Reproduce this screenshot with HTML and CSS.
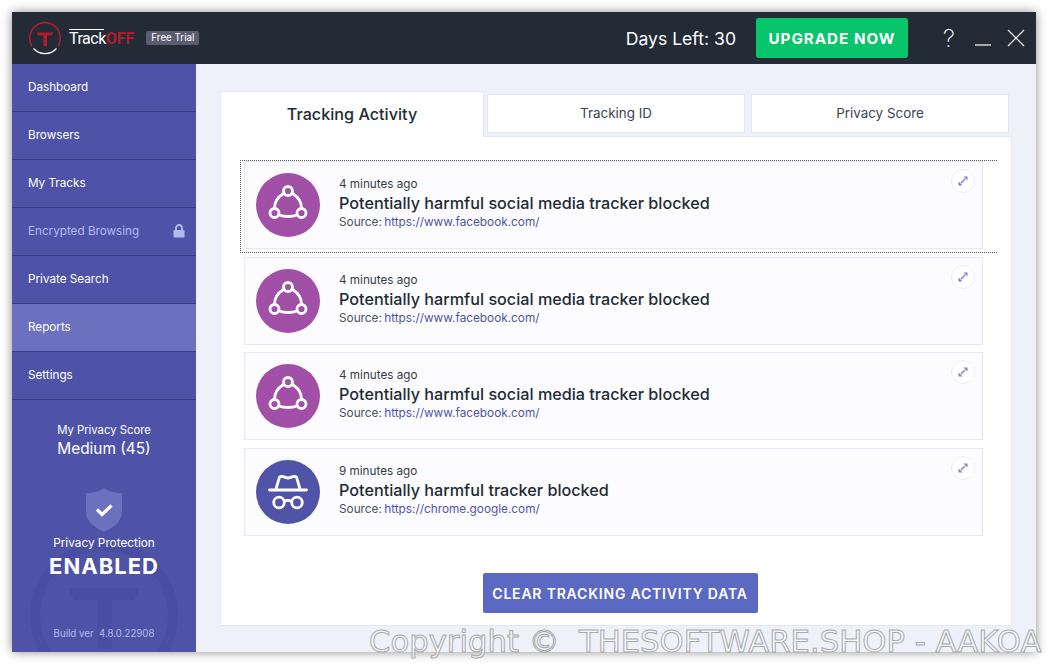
FILE: index.html
```html
<!DOCTYPE html>
<html lang="en">
<head>
<meta charset="utf-8">
<title>TrackOFF</title>
<link rel="stylesheet" href="styles.css">
</head>
<body>
<div class="window">
  <header class="topbar">
    <div class="brand">
      <svg class="logo" width="34" height="34" viewBox="0 0 34 34" fill="none">
        <path d="M4 25A15.300 15.300 0 1 1 30 25" stroke="#b01c2e" stroke-width="1.600"/>
        <path d="M5.500 27.500A15.500 15.500 0 0 0 28.500 27.500" stroke="#fff" stroke-width="1.200"/>
        <path d="M9 11.500H25L24 14.500H19V25H15.500V14.500H10Z" fill="#b01c2e"/>
      </svg>
      <span class="wordmark"><span class="wm-track">Track</span><span class="wm-off">OFF</span></span>
      <span class="badge">Free Trial</span>
    </div>
    <div class="topright">
      <span class="days">Days Left: 30</span>
      <button class="upgrade">UPGRADE NOW</button>
      <div class="winctl">
        <span class="help">?</span>
        <svg width="16" height="16" viewBox="0 0 16 16"><path d="M0 15H16" stroke="#fff" stroke-width="1.200"/></svg>
        <svg width="18" height="18" viewBox="0 0 18 18"><path d="M1 1L17 17M17 1L1 17" stroke="#fff" stroke-width="1.200"/></svg>
      </div>
    </div>
  </header>
  <div class="body">
    <aside class="sidebar">
      <nav class="nav">
        <a class="nav-item">Dashboard</a>
        <a class="nav-item">Browsers</a>
        <a class="nav-item">My Tracks</a>
        <a class="nav-item nav-locked">Encrypted Browsing
          <svg width="12" height="14" viewBox="0 0 12 14"><path d="M3 6V4a3 3 0 0 1 6 0v2" fill="none" stroke="#b4b8ee" stroke-width="1.800"/><rect x="0.500" y="6" width="11" height="7.500" rx="1" fill="#b4b8ee"/></svg>
        </a>
        <a class="nav-item">Private Search</a>
        <a class="nav-item nav-active">Reports</a>
        <a class="nav-item">Settings</a>
      </nav>
      <div class="side-bottom">
        <svg class="side-mark" width="184" height="160" viewBox="0 0 184 160" fill="none">
          <circle cx="92" cy="78" r="69" stroke="#4a4ea3" stroke-width="10"/>
          <path d="M56 51H128L122 63H100V112H85V63H62Z" fill="#4a4ea3"/>
        </svg>
        <div class="score-label">My Privacy Score</div>
        <div class="score-value">Medium (45)</div>
        <svg class="shield" width="36" height="44" viewBox="0 0 36 44">
          <path d="M18 0C23 4 29 5 36 5V24C36 33 27 40 18 44C9 40 0 33 0 24V5C7 5 13 4 18 0Z" fill="#6b70bf"/>
          <path d="M11 21.500L16 26.500L25.500 17.500" fill="none" stroke="#fff" stroke-width="3.200"/>
        </svg>
        <div class="protect-label">Privacy Protection</div>
        <div class="protect-value">ENABLED</div>
        <div class="build">Build ver&nbsp; 4.8.0.22908</div>
      </div>
    </aside>
    <main class="main">
      <div class="tabs">
        <div class="tab tab-active">Tracking Activity</div>
        <div class="tab">Tracking ID</div>
        <div class="tab">Privacy Score</div>
      </div>
      <section class="panel">
        <div class="list">
          <article class="card card-focus">
            <span class="avatar avatar-purple"><svg width="40" height="40" viewBox="0 0 40 40" fill="none" stroke="#fff" stroke-width="2.800"><circle cx="20" cy="6" r="4.500"/><circle cx="6.500" cy="28" r="4.500"/><circle cx="33.500" cy="28" r="4.500"/><path d="M15.500 8.500C10 12 6.500 17 6.500 23M24.500 8.500C30 12 33.500 17 33.500 23M11 30C16 32 24 32 29 30"/></svg></span>
            <div class="info"><div class="when">4 minutes ago</div><div class="title">Potentially harmful social media tracker blocked</div><div class="source">Source: <a class="link">https://www.facebook.com/</a></div></div>
            <span class="expand"><svg width="10" height="10" viewBox="0 0 10 10"><path d="M5.500 0.500H9.500V4.500ZM0.500 5.500V9.500H4.500Z" fill="#7c80d2"/><path d="M7 3L3 7" stroke="#7c80d2" stroke-width="1.500"/></svg></span>
          </article>
          <article class="card">
            <span class="avatar avatar-purple"><svg width="40" height="40" viewBox="0 0 40 40" fill="none" stroke="#fff" stroke-width="2.800"><circle cx="20" cy="6" r="4.500"/><circle cx="6.500" cy="28" r="4.500"/><circle cx="33.500" cy="28" r="4.500"/><path d="M15.500 8.500C10 12 6.500 17 6.500 23M24.500 8.500C30 12 33.500 17 33.500 23M11 30C16 32 24 32 29 30"/></svg></span>
            <div class="info"><div class="when">4 minutes ago</div><div class="title">Potentially harmful social media tracker blocked</div><div class="source">Source: <a class="link">https://www.facebook.com/</a></div></div>
            <span class="expand"><svg width="10" height="10" viewBox="0 0 10 10"><path d="M5.500 0.500H9.500V4.500ZM0.500 5.500V9.500H4.500Z" fill="#7c80d2"/><path d="M7 3L3 7" stroke="#7c80d2" stroke-width="1.500"/></svg></span>
          </article>
          <article class="card">
            <span class="avatar avatar-purple"><svg width="40" height="40" viewBox="0 0 40 40" fill="none" stroke="#fff" stroke-width="2.800"><circle cx="20" cy="6" r="4.500"/><circle cx="6.500" cy="28" r="4.500"/><circle cx="33.500" cy="28" r="4.500"/><path d="M15.500 8.500C10 12 6.500 17 6.500 23M24.500 8.500C30 12 33.500 17 33.500 23M11 30C16 32 24 32 29 30"/></svg></span>
            <div class="info"><div class="when">4 minutes ago</div><div class="title">Potentially harmful social media tracker blocked</div><div class="source">Source: <a class="link">https://www.facebook.com/</a></div></div>
            <span class="expand"><svg width="10" height="10" viewBox="0 0 10 10"><path d="M5.500 0.500H9.500V4.500ZM0.500 5.500V9.500H4.500Z" fill="#7c80d2"/><path d="M7 3L3 7" stroke="#7c80d2" stroke-width="1.500"/></svg></span>
          </article>
          <article class="card">
            <span class="avatar avatar-indigo"><svg width="40" height="40" viewBox="0 0 40 40" fill="none" stroke="#fff" stroke-width="2.800"><path d="M1.500 18H38.500" stroke-linecap="round"/><path d="M8 17L11.500 5C14 3 17 6 20 6C23 6 26 3 28.500 5L32 17"/><circle cx="11" cy="30.500" r="5.300"/><circle cx="29" cy="30.500" r="5.300"/><path d="M16 29.500C18.500 28 21.500 28 24 29.500"/></svg></span>
            <div class="info"><div class="when">9 minutes ago</div><div class="title">Potentially harmful tracker blocked</div><div class="source">Source: <a class="link">https://chrome.google.com/</a></div></div>
            <span class="expand"><svg width="10" height="10" viewBox="0 0 10 10"><path d="M5.500 0.500H9.500V4.500ZM0.500 5.500V9.500H4.500Z" fill="#7c80d2"/><path d="M7 3L3 7" stroke="#7c80d2" stroke-width="1.500"/></svg></span>
          </article>
        </div>
        <div class="actions"><button class="clear">CLEAR TRACKING ACTIVITY DATA</button></div>
      </section>
    </main>
  </div>
</div>
<div class="watermark">Copyright ©&nbsp; THESOFTWARE.SHOP - AAKOA</div>
</body>
</html>
```
FILE: styles.css
```css
* { box-sizing: border-box; }
html, body { height: 100%; }
body {
  margin: 0;
  padding: 12px;
  background: #fff;
  font-family: "Inter", "Roboto", sans-serif;
  color: #222b36;
  overflow: hidden;
  position: relative;
}
.window {
  width: 1024px;
  height: 640px;
  display: flex;
  flex-direction: column;
  box-shadow: 0 0 10px rgba(0,0,0,.45);
}
.topbar {
  height: 52px;
  flex: none;
  background: #222b36;
  display: flex;
  align-items: center;
  justify-content: space-between;
  color: #fff;
}
.brand { display: flex; align-items: center; padding-left: 16px; }
.logo { flex: none; }
.wordmark { position: relative; margin-left: 7px; font: 400 16px "Roboto", sans-serif; letter-spacing: -.5px; }
.wordmark::before {
  content: "";
  position: absolute;
  left: 0;
  top: 0;
  width: 35px;
  height: 1px;
  background: #fff;
}
.wm-track { color: #fff; }
.wm-off { color: #b01c2e; font-weight: 700; letter-spacing: 0; }
.badge {
  margin-left: 12px;
  background: #5b5b72;
  color: #fff;
  font-size: 9.800px;
  line-height: 14px;
  padding: 0 5px;
  border-radius: 2px;
}
.topright { display: flex; align-items: center; }
.days { font-size: 17.600px; margin-right: 20px; }
.upgrade {
  width: 152px;
  height: 40px;
  border: 0;
  border-radius: 3px;
  background: #08c46a;
  color: #fff;
  font: 700 15.200px "Inter", sans-serif;
  letter-spacing: 1px;
}
.winctl { display: flex; align-items: center; gap: 16px; padding: 0 11px 0 35px; }
.help { font-size: 24px; font-weight: 200; width: 13px; margin-right: 3px; }
.body { flex: 1; display: flex; min-height: 0; }
.sidebar { width: 184px; flex: none; background: #4f53a8; color: #fff; display: flex; flex-direction: column; }
.nav-item {
  height: 48px;
  display: flex;
  align-items: center;
  justify-content: space-between;
  padding: 0 11px 2px 16px;
  font-size: 11.700px;
  border-bottom: 1px solid #3a3d85;
}
.nav-locked { color: #b4b8ee; }
.nav-active { background: #6b70bf; }
.side-bottom {
  position: relative;
  flex: 1;
  overflow: hidden;
  display: flex;
  flex-direction: column;
  align-items: center;
  padding-top: 23px;
}
.side-mark { position: absolute; left: 0; top: 137px; }
.side-bottom > div, .shield { position: relative; }
.score-label { font-size: 11.300px; line-height: 14px; }
.score-value { font-size: 15.400px; line-height: 22px; margin-top: 1px; }
.shield { margin-top: 28px; }
.protect-label { font-size: 11.800px; line-height: 14px; margin-top: 4px; }
.protect-value { font-size: 22px; font-weight: 700; letter-spacing: 1px; line-height: 28px; margin-top: 2px; }
.build { font-size: 9.700px; color: #b4b8ee; margin-top: 48px; }
.main { flex: 1; background: #eef1fa; padding: 27px 24px 26px; display: flex; flex-direction: column; min-width: 0; }
.tabs { display: flex; align-items: flex-start; gap: 3px; height: 46px; flex: none; position: relative; z-index: 1; }
.tab {
  width: 258px;
  height: 39px;
  margin-top: 3px;
  padding-bottom: 2px;
  background: #fff;
  border: 1px solid #e3e7f6;
  display: flex;
  align-items: center;
  justify-content: center;
  font-size: 13.400px;
  color: #3a4350;
}
.tab + .tab + .tab { margin-left: 3px; }
.tab-active {
  width: 264px;
  height: 46px;
  margin-top: 0;
  border-bottom: 0;
  font-size: 16.200px;
  font-weight: 500;
  color: #222b36;
}
.panel { flex: 1; background: #fff; border: 1px solid #e3e7f6; margin-top: -1px; width: 792px; display: flex; flex-direction: column; padding: 24px 0 0 23px; }
.list { display: flex; flex-direction: column; gap: 7.500px; width: 739px; }
.card {
  position: relative;
  height: 88px;
  background: #fcfcfe;
  border: 1px solid #e3e7f6;
  display: flex;
  align-items: center;
  padding-left: 11px;
}
.card-focus::after {
  content: "";
  position: absolute;
  left: -5px;
  top: -2px;
  width: 756px;
  height: 91px;
  border: 1px dotted #555;
  border-right: 0;
}
.avatar { width: 64px; height: 64px; border-radius: 50%; flex: none; display: flex; align-items: center; justify-content: center; }
.avatar-purple { background: #a24fa7; }
.avatar-indigo { background: #5054a8; }
.info { margin-left: 19px; padding-bottom: 3px; }
.when { font-size: 11.700px; line-height: 15px; color: #333b47; }
.title { font-size: 16.200px; font-weight: 550; line-height: 22px; }
.source { font-size: 11.800px; line-height: 15px; color: #4a5260; word-spacing: -1px; margin-top: 1px; }
.link { color: #4f53a8; }
.expand {
  position: absolute;
  right: 7px;
  top: 7px;
  width: 24px;
  height: 24px;
  border-radius: 50%;
  background: #fff;
  border: 1px solid #eceef8;
  display: flex;
  align-items: center;
  justify-content: center;
}
.actions { display: flex; justify-content: center; margin-top: 37px; padding-right: 15px; }
.clear {
  width: 275px;
  height: 40px;
  border: 0;
  border-radius: 2px;
  background: #5c69c3;
  color: #fff;
  font: 600 14px "Inter", sans-serif;
  letter-spacing: .8px;
  padding-top: 2px;
}
.watermark {
  position: absolute;
  left: 369px;
  top: 624px;
  white-space: nowrap;
  font: 400 30.700px "DejaVu Sans", sans-serif;
  color: rgba(255,255,255,.55);
  -webkit-text-stroke: 1px #a9a9a9;
}
```
